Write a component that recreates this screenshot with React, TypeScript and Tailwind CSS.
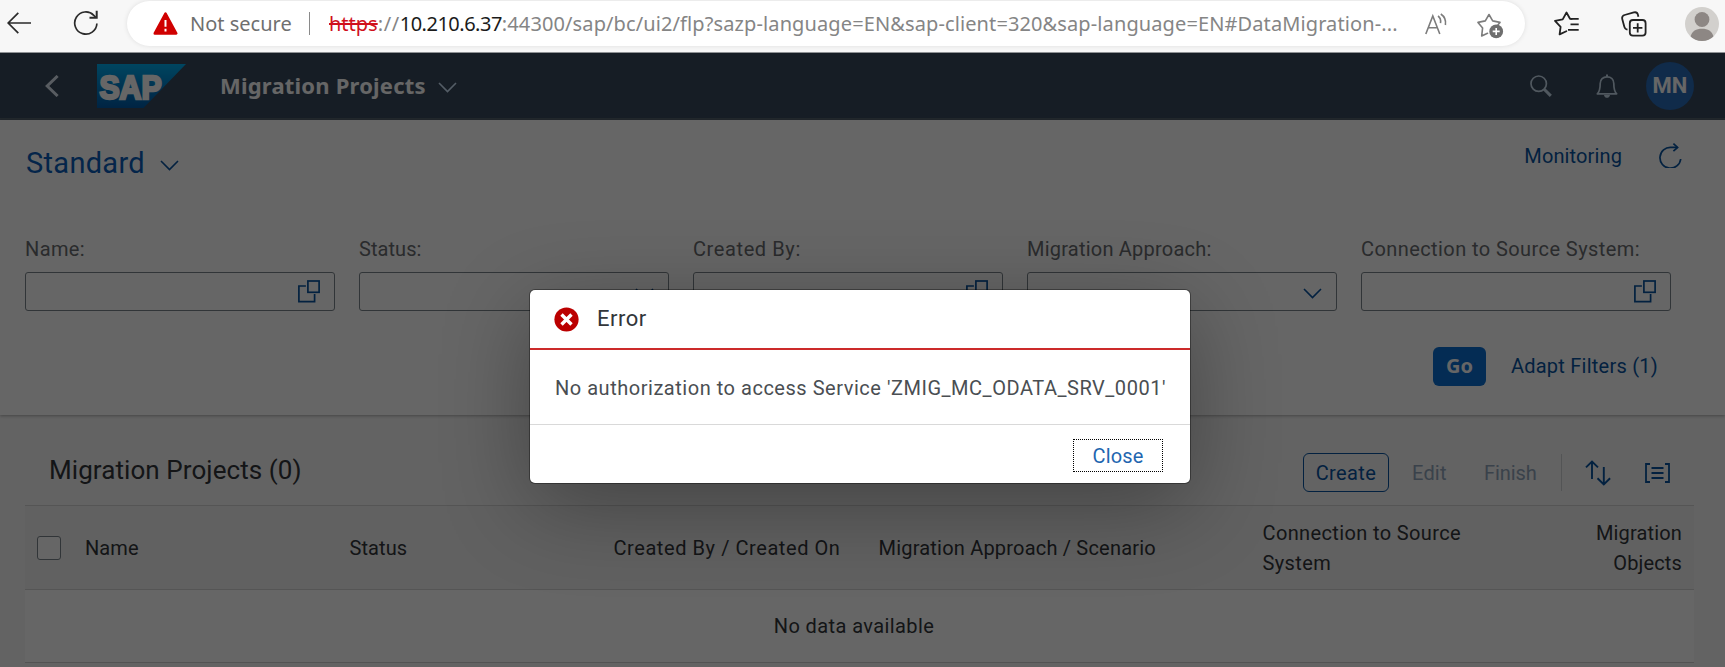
import React from "react";

type IconProps = { className?: string };

const BackArrow = () => (
  <svg width="24" height="22" viewBox="0 0 24 22" fill="none" stroke="#2b2b2b" strokeWidth="1.7">
    <path d="M24 11H1.3M11.3 .8L1.2 11l10.1 10.2" />
  </svg>
);

const Reload = () => (
  <svg width="26" height="26" viewBox="0 0 26 26" fill="none" stroke="#2b2b2b" strokeWidth="1.7">
    <path d="M23.900 13.500A11.100 11.100 0 1 1 20.800 5.300L23 7.600" />
    <path d="M23.7 .8v7h-7.2" strokeWidth="2" />
  </svg>
);

const Warning = () => (
  <svg width="25" height="23" viewBox="0 0 25 23">
    <path d="M12.5 1.6L23.2 21.4H1.8Z" fill="#d00000" stroke="#d00000" strokeWidth="2.6" strokeLinejoin="round" />
    <path d="M12.5 8v6.8M12.5 16.8v2.6" stroke="#fff" strokeWidth="2" />
  </svg>
);

const ReadAloud = () => (
  <svg width="24" height="22" viewBox="0 0 24 22" fill="none" stroke="#7c7c7c" strokeWidth="1.6">
    <path d="M.8 21L7.8 3l7 18M3.2 14.8h9.2" />
    <path d="M13 3c2 1.400 3 4 2.500 7.200M15.800 1c3.600 2.400 5.400 6 4.600 11" />
  </svg>
);

const StarAdd = () => (
  <svg width="27" height="26" viewBox="0 0 27 26">
    <path
      d="M10.500 20.300L4.700 22.900l.9-8L1 9.400l7.300-1.500L12 1.500l3.700 6.400L23 9.400l-2 2.300"
      fill="none" stroke="#7c7c7c" strokeWidth="1.600" strokeLinejoin="round" strokeLinecap="round"
    />
    <circle cx="19.200" cy="18.400" r="6.900" fill="#6e6e6e" />
    <path d="M19.200 14.900v7M15.700 18.400h7" stroke="#fff" strokeWidth="1.600" />
  </svg>
);

const Favorites = () => (
  <svg width="26" height="25" viewBox="0 0 26 25" fill="none" stroke="#222" strokeWidth="1.800" strokeLinejoin="round" strokeLinecap="round">
    <path d="M12.300 20.200L5.600 23.400l1-7.600L1 9.800l7.700-1.400L12.500 1.500l3.500 6.300h1.800" />
    <path d="M16.500 7.800h8.200M16.500 13.300h8.200M14 18.800h10.700" strokeLinecap="butt" />
  </svg>
);

const Collections = () => (
  <svg width="26" height="26" viewBox="0 0 26 26" fill="none" stroke="#222" strokeWidth="1.800">
    <rect x="8.800" y="9" width="15.800" height="15.600" rx="3.200" />
    <path d="M16.700 12.200v9.400M12 16.900h9.400" />
    <path d="M6.500 18.600c-1.700-.2-2.700-1-3.100-2.700L1.300 8.200C.8 6.300 1.700 4.600 3.600 4L12.800 1.400c1.900-.5 3.600.4 4.100 2.300l.5 2" />
  </svg>
);

const Profile = () => (
  <svg width="34" height="34" viewBox="0 0 34 34">
    <defs>
      <clipPath id="profile-clip"><circle cx="17" cy="17" r="17" /></clipPath>
    </defs>
    <g clipPath="url(#profile-clip)">
      <rect width="34" height="34" fill="#d2d0cd" />
      <circle cx="17" cy="12.500" r="7.400" fill="#8d8784" />
      <path d="M5.500 29.500C7 24 11 21.700 17 21.700s10 2.300 11.500 7.800L26 34H8Z" fill="#8d8784" />
    </g>
  </svg>
);

const NavBack = () => (
  <svg width="14" height="22" viewBox="0 0 14 22" fill="none" stroke="#dbe6f2" strokeWidth="3">
    <path d="M12.600 1L2.200 11l10.400 10" />
  </svg>
);

const SapLogo = () => (
  <svg width="89" height="44" viewBox="0 0 89 44">
    <defs>
      <linearGradient id="sap-gradient" x1="0" y1="0" x2="0" y2="1">
        <stop offset="0" stopColor="#00aeef" />
        <stop offset=".5" stopColor="#0082cc" />
        <stop offset="1" stopColor="#005aa8" />
      </linearGradient>
    </defs>
    <path d="M0 0H89L46.500 44H0Z" fill="url(#sap-gradient)" />
    <text
      x="2.500" y="34.500" textLength="62" lengthAdjust="spacingAndGlyphs"
      fill="#fff" stroke="#fff" strokeWidth="2.600" className="font-['Liberation_Sans',sans-serif] text-[34px] font-bold"
    >
      SAP
    </text>
  </svg>
);

const Chevron = ({ className }: IconProps) => (
  <svg width="19" height="11" viewBox="0 0 19 11" fill="none" stroke="currentColor" strokeWidth="1.600" className={className}>
    <path d="M1 1l8.500 8.600L18 1" />
  </svg>
);

const Search = () => (
  <svg width="22" height="22" viewBox="0 0 22 22" fill="none" stroke="#c9dcee">
    <circle cx="8.700" cy="8.700" r="7.700" strokeWidth="1.700" />
    <path d="M14.200 14.200l6.600 6.700" strokeWidth="3" />
  </svg>
);

const Bell = () => (
  <svg width="22" height="24" viewBox="0 0 22 24">
    <path
      d="M1.300 19.800C4 17.500 4.200 14.500 4.200 9.600 4.200 5.400 7 2.800 11 2.800s6.800 2.600 6.800 6.800c0 4.900.2 7.900 2.900 10.200Z"
      fill="none" stroke="#c9dcee" strokeWidth="1.700" strokeLinejoin="round"
    />
    <path d="M10 .4h2v2.400h-2ZM8 21h6c-.3 1.900-1.400 2.800-3 2.800S8.300 22.900 8 21Z" fill="#c9dcee" />
  </svg>
);

const Refresh = () => (
  <svg width="23" height="25" viewBox="0 0 23 25" fill="none" stroke="#0854a0" strokeWidth="1.700">
    <path d="M21.700 16A10.400 10.400 0 1 1 12 4.400h6.400" />
    <path d="M14.400 .6l4.200 3.800-4.200 3.800" />
  </svg>
);

const ValueHelp = () => (
  <svg width="22" height="23" viewBox="0 0 22 23" fill="none" stroke="#0854a0" strokeWidth="1.700">
    <rect x="9.900" y="1" width="11.200" height="11.300" />
    <path d="M7.900 6H.9v15.700h15.700V14" />
  </svg>
);

const Sort = () => (
  <svg width="26" height="26" viewBox="0 0 26 26" fill="none" stroke="#0854a0" strokeWidth="1.900">
    <path d="M7 19V1.800M1 7.400L7 1.500l6 5.900M18.800 7v17M12.500 18.200l6.300 6.200 6.300-6.200" />
  </svg>
);

const GroupList = () => (
  <svg width="25" height="20" viewBox="0 0 25 20" fill="none" stroke="#0854a0" strokeWidth="1.800">
    <path d="M5 1H1v18h4M20 1h4v18h-4M6.500 5h12M6.500 10h12M6.500 15h12" />
  </svg>
);

const ErrorIcon = () => (
  <svg width="25" height="25" viewBox="0 0 25 25">
    <circle cx="12.500" cy="12.500" r="12.100" fill="#bb0000" />
    <path d="M7.500 7.500l10 10M17.500 7.500l-10 10" stroke="#fff" strokeWidth="3.400" />
  </svg>
);

const filters = [
  { label: "Name:", tracking: "tracking-[0.38px]", kind: "help" },
  { label: "Status:", tracking: "tracking-[0.07px]", kind: "select" },
  { label: "Created By:", tracking: "tracking-[0.6px]", kind: "help" },
  { label: "Migration Approach:", tracking: "tracking-[0.22px]", kind: "select" },
  { label: "Connection to Source System:", tracking: "tracking-[0.42px]", kind: "help" },
];

function BrowserBar() {
  return (
    <div className="flex h-[53px] shrink-0 items-start border-b border-[#8f9295] bg-[#f7f7f7] pl-[7px]">
      <div className="flex h-[46px] items-center"><BackArrow /></div>
      <div className="ml-[42px] flex h-[46px] items-center"><Reload /></div>
      <div className="mt-px ml-[28px] flex h-[45px] w-[1398px] items-center rounded-full bg-white pl-[26px] shadow-[0_0_5px_rgba(0,0,0,0.1)]">
        <Warning />
        <div className="ml-[12px] w-[119px] font-['Noto_Sans',sans-serif] text-[20px] leading-[24px] text-[#6f6f6f]">Not secure</div>
        <div className="h-[23px] w-px bg-[#8a8a8a]" />
        <div className="ml-[19px] flex w-[1096px] font-['Noto_Sans',sans-serif] text-[20px] leading-[24px] whitespace-nowrap text-[#858585]">
          <span className="text-[#d0101c] line-through decoration-2">https</span>
          <span className="tracking-[0.6px]">://</span>
          <span className="tracking-[-0.5px] text-[#1b1b1b]">10.210.6.37</span>
          <span className="tracking-[0.11px]">:44300/sap/bc/ui2/flp?sazp-language=EN&amp;sap-client=320&amp;sap-language=EN#DataMigration-...</span>
        </div>
        <div><ReadAloud /></div>
        <div className="mt-1 ml-[28px]"><StarAdd /></div>
      </div>
      <div className="ml-[29px] flex h-[47px] items-center"><Favorites /></div>
      <div className="ml-[41px] flex h-[48px] items-center"><Collections /></div>
      <div className="ml-[38px] flex h-[48px] items-center"><Profile /></div>
    </div>
  );
}

function ShellHeader() {
  return (
    <header className="flex h-[67px] shrink-0 items-center border-b-2 border-[#56636f] bg-[#38495c] pr-[31px] pl-[45px]">
      <NavBack />
      <div className="mt-px ml-[38px]"><SapLogo /></div>
      <div className="-mt-px ml-[34px] pb-px font-['Noto_Sans',sans-serif] text-[22px] leading-[30px] font-bold tracking-[0.2px] text-white">Migration Projects</div>
      <Chevron className="mt-[3px] ml-[12px] text-[#d1e8ff]" />
      <div className="ml-auto"><Search /></div>
      <div className="ml-[44px]"><Bell /></div>
      <div className="ml-[28px] flex h-[48px] w-[48px] items-center justify-center rounded-full bg-[#286bb8] text-[22px] font-bold text-white">MN</div>
    </header>
  );
}

function FilterBar() {
  return (
    <section className="h-[295px] shrink-0 bg-white pr-[43px] pl-[25px] shadow-[0_1px_3px_rgba(0,0,0,0.3)]">
      <div className="flex h-[117px] items-start justify-between">
        <div className="flex items-center pt-[27px] pl-px text-[#0a5cb8]">
          <span className="text-[29px] leading-[32px] tracking-[0.3px]">Standard</span>
          <Chevron className="mt-[4px] ml-[15px] text-[#0854a0]" />
        </div>
        <div className="flex items-center pt-[23px]">
          <span className="mr-[37px] text-[20px] leading-[24px] tracking-[0.12px] text-[#0854a0]">Monitoring</span>
          <Refresh />
        </div>
      </div>
      <div className="flex gap-[24.5px]">
        {filters.map((f) => (
          <div key={f.label} className="w-[309.500px] shrink-0">
            <div className={`text-[20px] leading-[24px] text-[#6a6d70] ${f.tracking}`}>{f.label}</div>
            <div className="mt-[11px] flex h-[39px] items-center justify-end rounded-[3px] border-[1.500px] border-[#7c858c] pr-[14px] text-[#0854a0]">
              {f.kind === "help" ? <ValueHelp /> : <Chevron className="mt-[3px]" />}
            </div>
          </div>
        ))}
      </div>
      <div className="mt-[35px] flex h-[40px] items-center justify-end">
        <div className="flex h-[39px] w-[53px] items-center justify-center rounded-[6px] bg-[#0a6ed1] font-['Noto_Sans',sans-serif] text-[20px] leading-[24px] font-bold text-white">Go</div>
        <span className="mr-[24px] ml-[25px] text-[20px] leading-[24px] tracking-[0.24px] text-[#0854a0]">Adapt Filters (1)</span>
      </div>
    </section>
  );
}

function ProjectsTable() {
  return (
    <section className="flex flex-1 flex-col pr-[31px] pl-[25px]">
      <div className="flex h-[90px] items-start pt-[38px] pr-[24px] pl-[24px]">
        <h2 className="mt-px text-[26px] leading-[32px] tracking-[0.08px] text-[#32363a]">Migration Projects (0)</h2>
        <div className="ml-auto flex h-[39px] items-center text-[20px] leading-[24px] text-[#0854a0]">
          <div className="flex h-[39px] w-[86px] items-center justify-center rounded-[6px] border-[1.500px] border-[#0854a0] tracking-[0.4px]">Create</div>
          <span className="ml-[23px] w-[72px] tracking-[0.2px] text-[#91a5bb]">Edit</span>
          <span className="w-[77px] tracking-[-0.1px] text-[#91a5bb]">Finish</span>
          <div className="mr-[23px] h-[37px] w-px bg-[#d0d2d4]" />
          <Sort />
          <div className="ml-[34px]"><GroupList /></div>
        </div>
      </div>
      <div className="grid h-[85px] shrink-0 grid-cols-[60px_264.500px_264px_265px_384px_240px_1fr] items-center border-y border-[#d5d5d5] bg-[#f2f2f2] pr-[12px] text-[20px] leading-[30px] text-[#32363a]">
        <div className="ml-[12px] h-[24px] w-[24px] rounded-[3px] border-[1.500px] border-[#7c858c] bg-white" />
        <div className="tracking-[0.1px]">Name</div>
        <div className="tracking-[0.1px]">Status</div>
        <div className="tracking-[0.57px]">Created By / Created On</div>
        <div className="tracking-[0.2px]">Migration Approach / Scenario</div>
        <div className="tracking-[0.37px]">Connection to Source System</div>
        <div className="text-right tracking-[0.15px]">Migration<br />Objects</div>
      </div>
      <div className="flex h-[73px] shrink-0 items-center justify-center border-b border-[#cfcfcf] bg-white pr-[11px] text-[20px] leading-[24px] tracking-[0.4px] text-[#32363a]">
        No data available
      </div>
    </section>
  );
}

function ErrorDialog() {
  return (
    <div className="absolute top-[237px] left-[530px] flex h-[193px] w-[660px] flex-col rounded-[5px] bg-white shadow-[0_0_0_1px_rgba(0,0,0,0.35),0_22px_88px_0_rgba(0,0,0,0.33)]">
      <div className="flex h-[60px] items-center border-b-2 border-[#cc2a2a] pl-[24px]">
        <ErrorIcon />
        <span className="ml-[18px] text-[22px] leading-[26px] tracking-[0.5px] text-[#32363a]">Error</span>
      </div>
      <div className="flex h-[75px] items-center border-b border-[#d9d9d9] pt-[2px] pl-[25px] text-[20px] leading-[24px] tracking-[0.525px] whitespace-nowrap text-[#4a4e52]">
        No authorization to access Service 'ZMIG_MC_ODATA_SRV_0001'
      </div>
      <div className="flex flex-1 items-center justify-end pt-[3px] pr-[27px]">
        <button className="h-[33px] w-[90px] border border-dotted border-black text-[20px] leading-[24px] tracking-[0.16px] text-[#1f66b0]">Close</button>
      </div>
    </div>
  );
}

export default function App() {
  return (
    <div className="flex h-[667px] w-[1725px] flex-col overflow-hidden bg-[#f7f7f7] font-['Roboto',sans-serif]">
      <BrowserBar />
      <main className="relative flex flex-1 flex-col overflow-hidden">
        <ShellHeader />
        <FilterBar />
        <ProjectsTable />
        <div className="absolute inset-0 bg-black/60" />
        <ErrorDialog />
      </main>
    </div>
  );
}
